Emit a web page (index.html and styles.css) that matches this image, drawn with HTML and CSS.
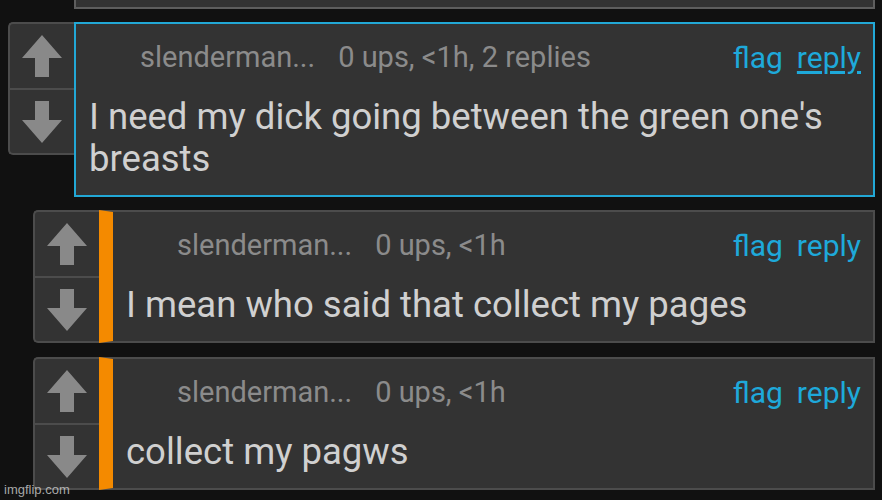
FILE: index.html
```html
<!DOCTYPE html>
<html>
<head>
<meta charset="utf-8">
<link rel="stylesheet" href="styles.css">
</head>
<body>
<div class="thread">
  <div class="prev"></div>

  <div class="comment c1">
    <div class="vote">
      <div class="vbtn up"><svg width="40" height="42" viewBox="0 0 40 42"><polygon points="20,0 40,23 27,23 27,42 13,42 13,23 0,23"/></svg></div>
      <div class="vbtn down"><svg width="40" height="42" viewBox="0 0 40 42"><polygon points="20,42 40,19 27,19 27,0 13,0 13,19 0,19"/></svg></div>
    </div>
    <div class="content selected">
      <div class="meta">
        <div class="info"><span class="user">slenderman...</span><span class="stats">0 ups, &lt;1h, 2 replies</span></div>
        <div class="actions"><span class="act">flag</span><span class="act ul">reply</span></div>
      </div>
      <div class="text">I need my dick going between the green one's breasts</div>
    </div>
  </div>

  <div class="comment c2">
    <div class="vote">
      <div class="vbtn up"><svg width="40" height="42" viewBox="0 0 40 42"><polygon points="20,0 40,23 27,23 27,42 13,42 13,23 0,23"/></svg></div>
      <div class="vbtn down"><svg width="40" height="42" viewBox="0 0 40 42"><polygon points="20,42 40,19 27,19 27,0 13,0 13,19 0,19"/></svg></div>
    </div>
    <div class="content reply">
      <div class="meta">
        <div class="info"><span class="user">slenderman...</span><span class="stats">0 ups, &lt;1h</span></div>
        <div class="actions"><span class="act">flag</span><span class="act">reply</span></div>
      </div>
      <div class="text">I mean who said that collect my pages</div>
    </div>
  </div>

  <div class="comment c2 last">
    <div class="vote">
      <div class="vbtn up"><svg width="40" height="42" viewBox="0 0 40 42"><polygon points="20,0 40,23 27,23 27,42 13,42 13,23 0,23"/></svg></div>
      <div class="vbtn down"><svg width="40" height="42" viewBox="0 0 40 42"><polygon points="20,42 40,19 27,19 27,0 13,0 13,19 0,19"/></svg></div>
    </div>
    <div class="content reply">
      <div class="meta">
        <div class="info"><span class="user">slenderman...</span><span class="stats">0 ups, &lt;1h</span></div>
        <div class="actions"><span class="act">flag</span><span class="act">reply</span></div>
      </div>
      <div class="text">collect my pagws</div>
    </div>
  </div>
</div>
<div class="watermark">imgflip.com</div>
</body>
</html>
```

FILE: styles.css
```css
html, body {
  margin: 0;
  padding: 0;
  background: #111111;
  font-family: Roboto, "Noto Sans", sans-serif;
  overflow: hidden;
}
body {
  width: 882px;
  height: 500px;
  position: relative;
}
.thread {
  width: 875px;
}
.prev {
  margin-left: 74px;
  height: 7px;
  border: 2px solid #5e5e5e;
  border-top: none;
  background: #333333;
  margin-bottom: 13px;
}
.comment {
  display: flex;
  align-items: flex-start;
}
.c1 {
  margin-left: 8px;
  margin-bottom: 13px;
}
.c2 {
  margin-left: 33px;
  margin-bottom: 14px;
}
.vote {
  width: 64px;
  height: 129px;
  border: 2px solid #4c4c4c;
  border-right: none;
  border-radius: 5px 0 0 5px;
  background: #333333;
  display: flex;
  flex-direction: column;
  flex: none;
}
.vbtn {
  display: flex;
  align-items: center;
  justify-content: center;
  fill: #898989;
}
.vbtn.up {
  height: 64px;
  border-bottom: 2px solid #4c4c4c;
}
.vbtn.down {
  height: 63px;
}
.content {
  flex: 1;
  background: #333333;
  padding: 13px 12px 0 13px;
  box-sizing: border-box;
}
.content.selected {
  height: 175px;
  border: 2px solid #22a8d6;
}
.content.reply {
  height: 133px;
  border: 2px solid #4c4c4c;
  border-left: 14px solid #f48a00;
}
.meta {
  display: flex;
  justify-content: space-between;
  align-items: center;
  height: 40px;
  font-size: 29px;
}
.info {
  padding-left: 51px;
  color: #8b8b8b;
  display: flex;
  gap: 23px;
}
.actions {
  display: flex;
  gap: 14px;
  color: #1ea9da;
  font-size: 30px;
}
.act.ul {
  text-decoration: underline;
  text-underline-offset: 3px;
}
.text {
  margin-top: 19px;
  font-size: 36.5px;
  line-height: 42px;
  color: #d0d0d0;
}
.watermark {
  position: absolute;
  left: 4px;
  top: 482px;
  font-size: 13px;
  color: rgba(220, 220, 220, 0.75);
  font-family: "Liberation Sans", Arial, sans-serif;
}
```
